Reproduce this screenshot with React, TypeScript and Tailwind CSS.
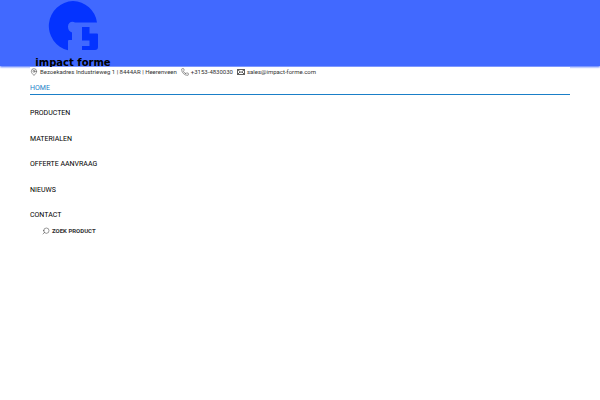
import { MapPin, Phone, Search } from "lucide-react";

const menuItems = [
  { label: "PRODUCTEN", href: "#producten" },
  { label: "MATERIALEN", href: "#materialen" },
  { label: "OFFERTE AANVRAAG", href: "#offerte" },
  { label: "NIEUWS", href: "#nieuws" },
  { label: "CONTACT", href: "#contact" },
];

const Logo = () => {
  return (
    <a href="#home" className="flex w-[86px] flex-col items-center pt-px">
      <svg viewBox="0 0 50 50" className="size-[50px] shrink-0" aria-hidden="true">
        <path
          d="M25 0a25 25 0 0 1 24 21.500H27c-3-2-7 0-7 4 0 3 1 5 4 6v7.500h-3q-1 0-1 1v9.300A25 25 0 0 1 25 0z"
          fill="#0433ff"
        />
        <path
          d="M34 26h7.500v6.500H49q1 0 1 1V46q0 3-3 3H34v-4h7.500v-5.500H34z"
          fill="#0433ff"
        />
      </svg>
      <span className="mt-1 font-['DejaVu_Sans',sans-serif] text-[10px] leading-4 font-bold whitespace-nowrap text-black">
        impact forme
      </span>
    </a>
  );
};

const Envelope = () => {
  return (
    <svg viewBox="0 0 16 12" className="h-1.5 w-2" fill="none" stroke="currentColor" strokeWidth="1.6" aria-hidden="true">
      <path d="M1 1h14v10H1zM1 1l7 6 7-6M1 11l5-5M15 11l-5-5" />
    </svg>
  );
};

const App = () => {
  return (
    <div className="font-['Roboto',sans-serif] text-[#333]">
      <header className="h-[66px] bg-[#4169ff] px-[30px] shadow-[0_1px_2px_#4169ff]">
        <Logo />
      </header>

      <main className="px-[30px]">
        {/* Contact details */}
        <address className="relative mt-px flex h-2.5 items-center gap-1 bg-white text-[6px] leading-2.5 not-italic">
          <span className="flex items-center gap-0.5">
            <MapPin className="size-2" strokeWidth={1.5} />
            Bezoekadres Industrieweg 1 | 8444AR | Heerenveen
          </span>
          <a href="tel:+31534830030" className="flex items-center gap-0.5">
            <Phone className="size-2" strokeWidth={1.5} />
            +3153-4830030
          </a>
          <a href="mailto:sales@impact-forme.com" className="flex items-center gap-0.5">
            <Envelope />
            sales@impact-forme.com
          </a>
        </address>

        <nav className="pt-[5px] text-[7px] leading-3 text-black">
          <a href="#home" className="block border-b border-[#1a7fc8] text-[#1a7fc8]">
            HOME
          </a>
          <ul className="flex h-[126px] flex-col justify-between pt-3">
            {menuItems.map((item) => (
              <li key={item.label}>
                <a href={item.href} className="block">
                  {item.label}
                </a>
              </li>
            ))}
          </ul>
        </nav>

        <button type="button" className="mt-1.5 ml-3 flex items-center gap-0.5 text-[6px] leading-2 font-bold">
          <Search className="size-2 -scale-x-100" strokeWidth={1.5} />
          ZOEK PRODUCT
        </button>
      </main>
    </div>
  );
};

export default App;
